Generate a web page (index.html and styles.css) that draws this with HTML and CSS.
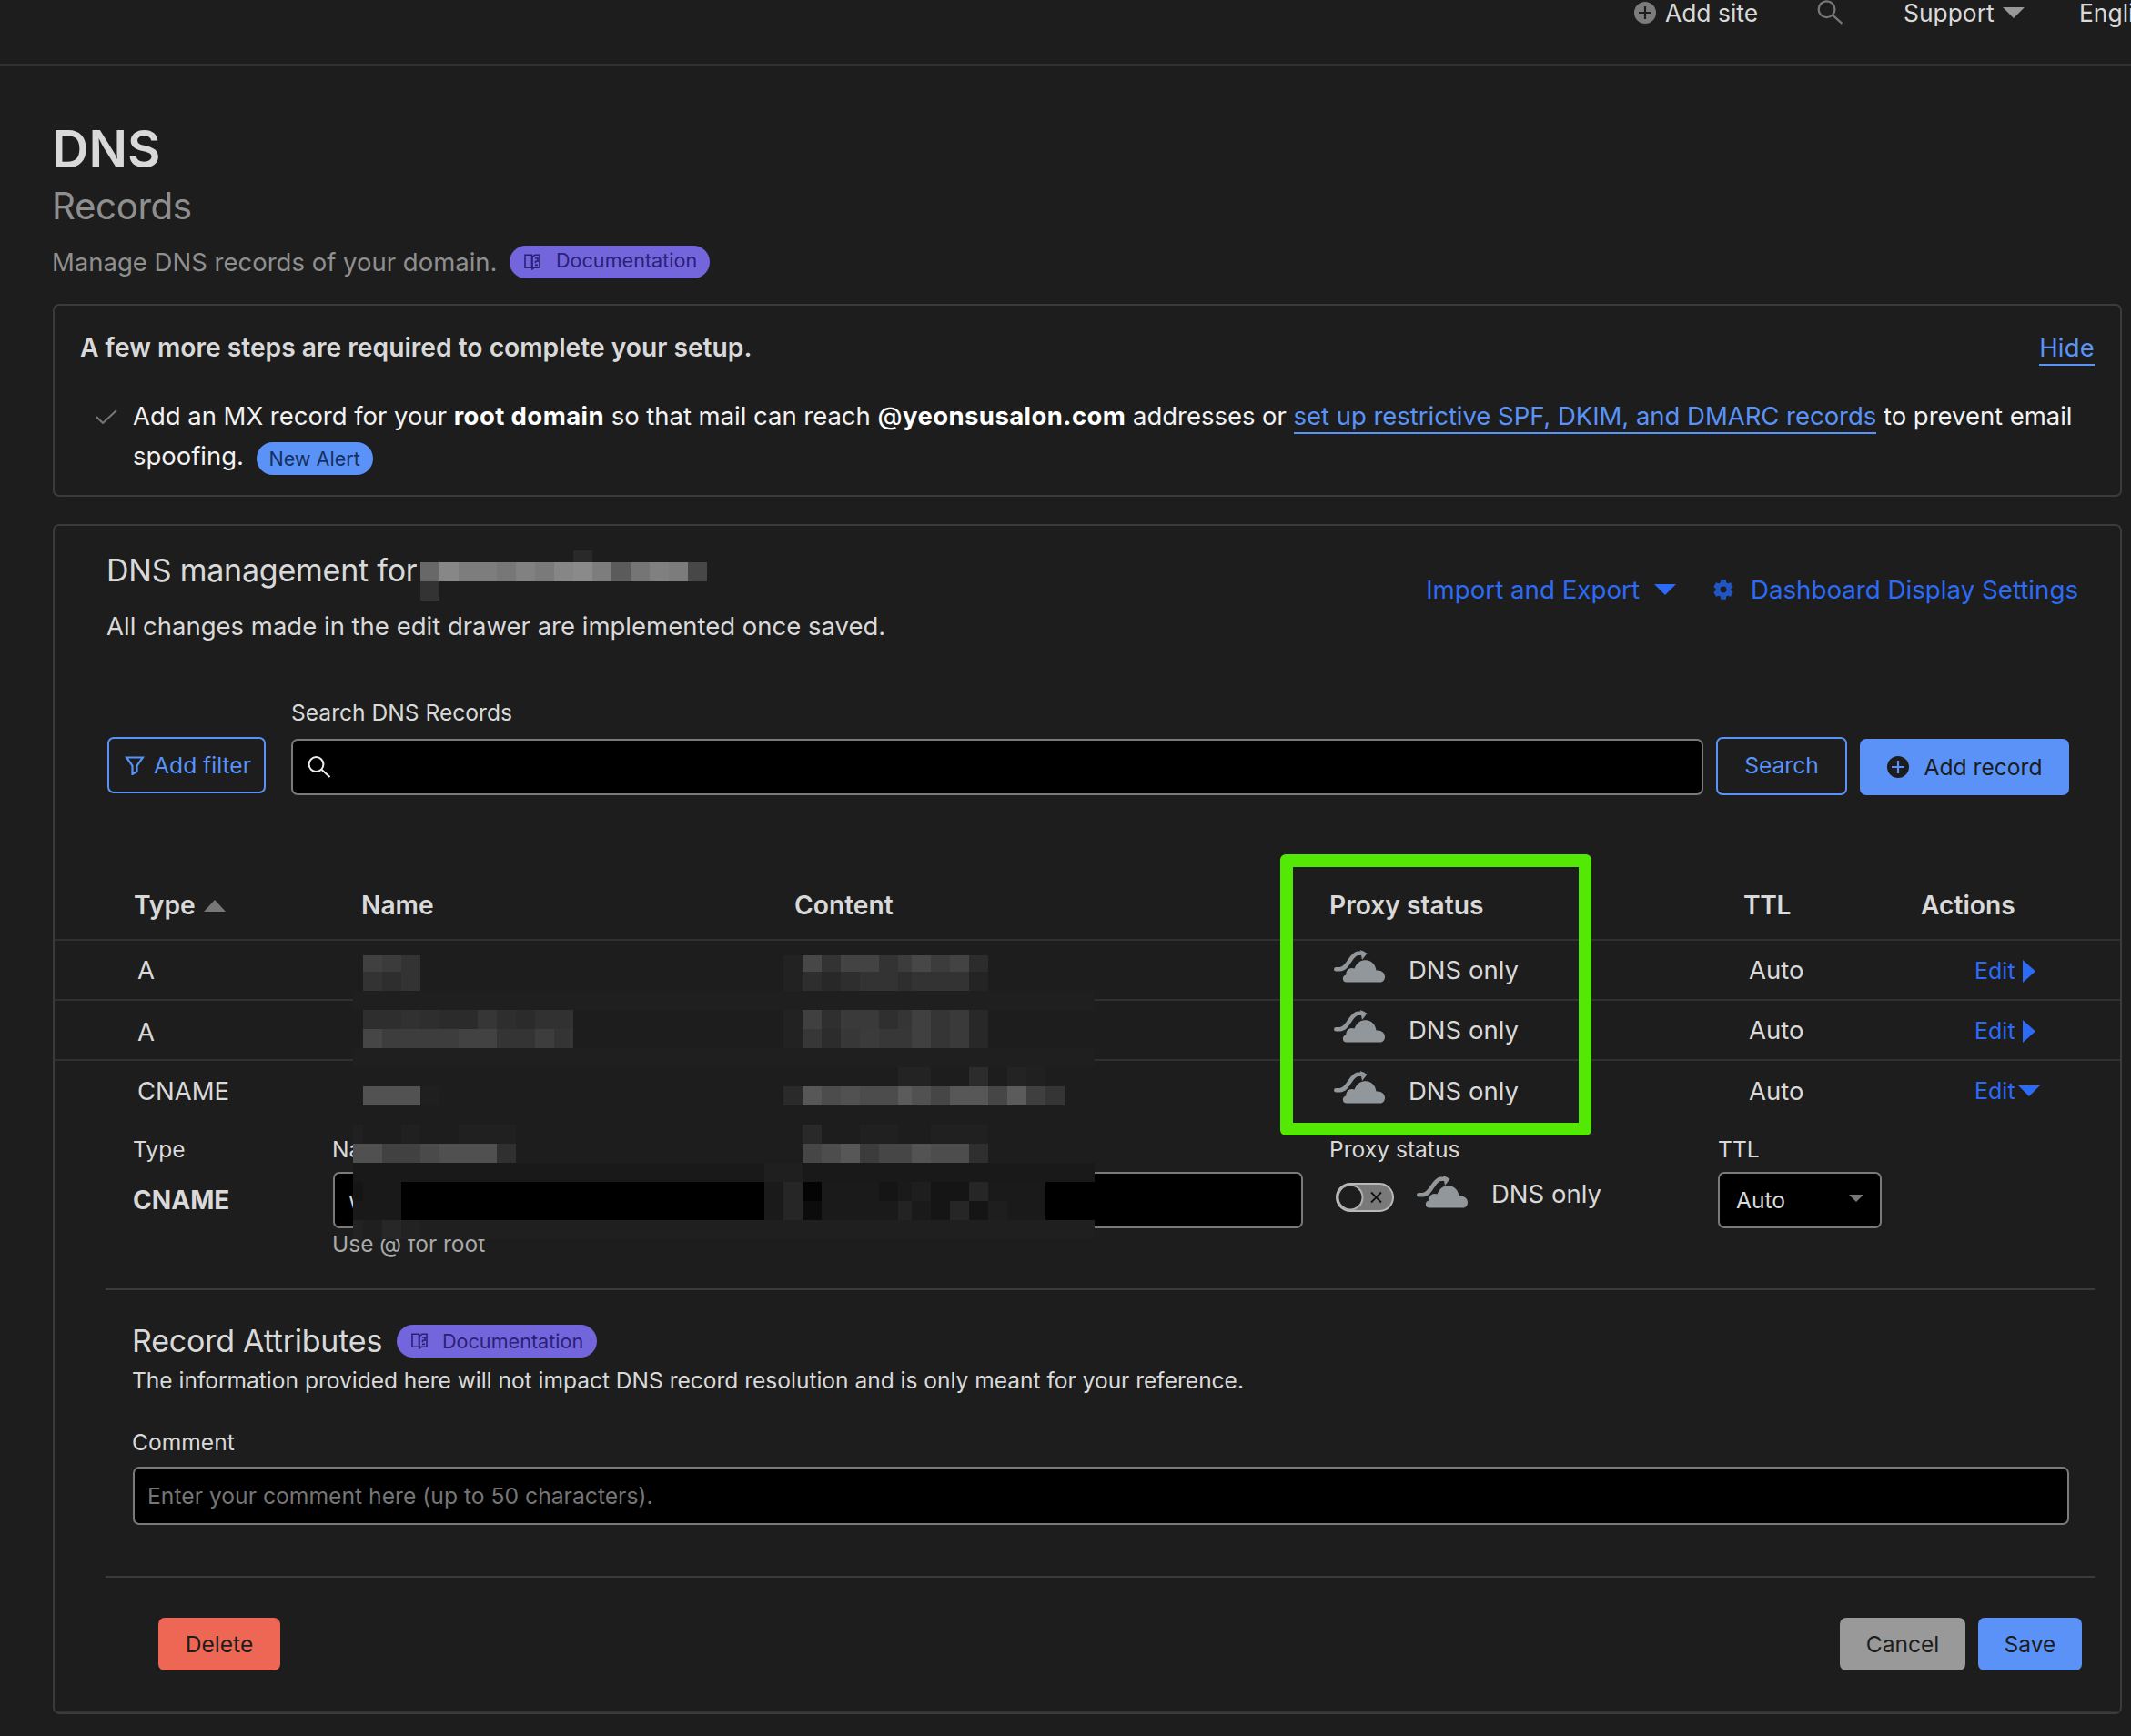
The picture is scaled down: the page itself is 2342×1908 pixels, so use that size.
FILE: index.html
```html
<!DOCTYPE html>
<html lang="en">
<head>
<meta charset="utf-8">
<title>DNS Records</title>
<link rel="stylesheet" href="styles.css">
</head>
<body>
<svg class="defs" width="0" height="0">
  <symbol id="i-plus" viewBox="0 0 24 24"><path fill-rule="evenodd" fill="currentColor" d="M12 0a12 12 0 1 0 0 24a12 12 0 1 0 0-24zM10.9 5h2.2v5.9H19v2.2h-5.9V19h-2.2v-5.9H5v-2.2h5.9z"/></symbol>
  <symbol id="i-search" viewBox="0 0 28 26"><g fill="none" stroke="currentColor" stroke-width="2.2"><circle cx="10.2" cy="9.8" r="8.6"/><path d="M16.5 16L26.5 25"/></g></symbol>
  <symbol id="i-down" viewBox="0 0 24 12"><path fill="currentColor" d="M0 0h24L12 12z"/></symbol>
  <symbol id="i-right" viewBox="0 0 14 25"><path fill="currentColor" d="M0 0l14 12.5L0 25z"/></symbol>
  <symbol id="i-doc" viewBox="0 0 18 18"><g fill="none" stroke="currentColor" stroke-width="1.6"><path d="M1 1.200h7.500v14.100H1zM9 15.800v1.700M9 3.500l3-2.300h5v14.100h-6l-2 1.500z"/><path d="M12 5h3v3.2h-2.5v2M12 12.4h3"/></g></symbol>
  <symbol id="i-cloud" viewBox="0 0 56 36"><g fill="#92979b"><path d="M14 35.6C8.500 35.600 8.800 28 13.200 27.500C13.200 22 17.500 18.500 22.500 20.600C25 13.500 30 11.200 35 11.200C41.500 11.200 45.800 16.500 46.500 22.600C52 22 56 25 56 29.600C56 33 54 35.600 51 35.600z"/><path d="M29 0L36.500 3.800L31 11z"/></g><path d="M2.300 21.200H6.500C16 21 17.500 5.500 26 3.800H32" fill="none" stroke="#92979b" stroke-width="4.600" stroke-linecap="round"/></symbol>
</svg>

<header class="topbar">
  <a class="add-site"><svg class="i24"><use href="#i-plus"/></svg>Add site</a>
  <svg class="top-search"><use href="#i-search"/></svg>
  <a class="support">Support<svg class="tri"><use href="#i-down"/></svg></a>
  <a class="lang">English</a>
</header>

<main>
  <div class="heading">
    <h1>DNS</h1>
    <h2>Records</h2>
    <div class="intro"><span class="intro-text">Manage DNS records of your domain.</span><a class="pill pill-doc raised"><svg class="doc"><use href="#i-doc"/></svg><span>Documentation</span></a></div>
  </div>

  <section class="card notice">
    <div class="notice-head"><strong>A few more steps are required to complete your setup.</strong><a class="ulink hide">Hide</a></div>
    <div class="notice-item">
      <svg class="check" viewBox="0 0 24 16"><path d="M1 8l7 7L23 1" fill="none" stroke="#777" stroke-width="2"/></svg>
      <p>Add an MX record for your <b>root domain</b> so that mail can reach <b><span class="at">@</span>yeonsusalon.com</b> addresses or <a class="ulink">set up restrictive SPF, DKIM, and DMARC records</a> to prevent email spoofing. <span class="pill pill-new">New Alert</span></p>
    </div>
  </section>

  <section class="card manage">
    <div class="manage-head">
      <div>
        <div class="manage-title"><h3>DNS management for</h3>
          <svg class="redact" viewBox="462 605 315 55" shape-rendering="crispEdges">
            <path fill="#292929" d="M630 605h21v13h-21z"/><path fill="#333" d="M462 639h21v21h-21z"/>
            <path fill="#686868" d="M462 618h21v21h-21z"/><path fill="#878787" d="M483 618h21v21h-21z"/>
            <path fill="#7d7d7d" d="M504 618h42v21h-42z"/><path fill="#777" d="M546 618h21v21h-21z"/>
            <path fill="#818181" d="M567 618h21v21h-21z"/><path fill="#7a7a7a" d="M588 618h21v21h-21z"/>
            <path fill="#868686" d="M609 618h21v21h-21z"/><path fill="#8a8a8a" d="M630 618h21v21h-21z"/>
            <path fill="#7d7d7d" d="M651 618h21v21h-21z"/><path fill="#5b5b5b" d="M672 618h21v21h-21z"/>
            <path fill="#757575" d="M693 618h21v21h-21z"/><path fill="#808080" d="M714 618h21v21h-21z"/>
            <path fill="#7c7c7c" d="M735 618h21v21h-21z"/><path fill="#474747" d="M756 618h21v21h-21z"/>
          </svg>
        </div>
        <p>All changes made in the edit drawer are implemented once saved.</p>
      </div>
      <div class="manage-links">
        <a>Import and Export</a><svg class="tri23"><use href="#i-down"/></svg>
        <svg class="gear" viewBox="-10.500 -10.500 21 21"><circle r="5.600" fill="none" stroke="currentColor" stroke-width="4.600"/><g fill="currentColor"><path id="t" d="M-2.600-10.300h5.200l.8 4h-6.800z"/><use href="#t" transform="rotate(60)"/><use href="#t" transform="rotate(120)"/><use href="#t" transform="rotate(180)"/><use href="#t" transform="rotate(240)"/><use href="#t" transform="rotate(300)"/></g></svg>
        <a>Dashboard Display Settings</a>
      </div>
    </div>

    <div class="toolbar">
      <button class="btn outline filter"><svg viewBox="0 0 21 21"><path d="M1.500 1.500h18L13 10.500V17l-5 3v-9.500z" fill="none" stroke="currentColor" stroke-width="2.200"/></svg>Add filter</button>
      <label class="search"><span>Search DNS Records</span><span class="input"><svg><use href="#i-search"/></svg></span></label>
      <button class="btn outline go">Search</button>
      <button class="btn primary add"><svg><use href="#i-plus"/></svg>Add record</button>
    </div>

    <div class="records">
      <div class="row head"><div>Type<svg class="sort" viewBox="0 0 24 13"><path d="M0 13h24L12 0z" fill="#777"/></svg></div><div class="nudge">Name</div><div class="nudge">Content</div><div class="nudge">Proxy status</div><div class="ttl-head">TTL</div><div>Actions</div></div>
      <div class="row"><div class="type">A</div><div></div><div></div><div class="proxy"><svg><use href="#i-cloud"/></svg>DNS only</div><div class="ttl">Auto</div><div class="edit">Edit<svg class="r"><use href="#i-right"/></svg></div></div>
      <div class="row"><div class="type low">A</div><div></div><div></div><div class="proxy"><svg><use href="#i-cloud"/></svg>DNS only</div><div class="ttl">Auto</div><div class="edit">Edit<svg class="r"><use href="#i-right"/></svg></div></div>
      <div class="row open"><div class="type">CNAME</div><div></div><div></div><div class="proxy"><svg><use href="#i-cloud"/></svg>DNS only</div><div class="ttl">Auto</div><div class="edit up">Edit<svg class="d"><use href="#i-down"/></svg></div></div>

      <div class="editor">
        <div class="field"><label>Type</label><strong>CNAME</strong></div>
        <div class="field pair">
          <div><label class="name">Name</label><span class="input value">w</span><small>Use @ for root</small></div>
          <div><label>&nbsp;</label><span class="input"></span></div>
        </div>
        <div class="field"><label class="nudge">Proxy status</label>
          <div class="switch-line">
            <svg class="toggle" viewBox="0 0 64 32"><rect x="1" y="1" width="62" height="30" rx="15" fill="#797979" stroke="#b9b9b9" stroke-width="2"/><circle cx="16" cy="16" r="13.500" fill="#1d1d1d" stroke="#b0b0b0" stroke-width="2"/><path d="M39 10.500l11 11M50 10.500l-11 11" stroke="#111" stroke-width="1.800"/></svg>
            <svg class="cloud"><use href="#i-cloud"/></svg><span>DNS only</span>
          </div>
        </div>
        <div class="field"><label>TTL</label><span class="input select">Auto<svg><use href="#i-down"/></svg></span></div>
      </div>

      <svg class="mask" viewBox="388 1050 815 312" shape-rendering="crispEdges">
        <path fill="#1d1d1d" d="M388 1050h815v312h-815z"/>
        <path fill="#1f1f1f" d="M388 1089h815v21h-815zM388 1152h815v21h-815zM388 1341h815v21h-815z"/>
        <path fill="#191919" d="M388 1278h815v21h-815z"/>
        <path d="M441 1299h399v42h-399zM1149 1299h54v42h-54z"/>
        <!-- name column -->
        <path fill="#404040" d="M399 1050h21v18h-21z"/><path fill="#3b3b3b" d="M420 1050h21v18h-21z"/><path fill="#333" d="M441 1050h21v18h-21zM399 1068h21v21h-21zM441 1068h21v21h-21z"/><path fill="#2e2e2e" d="M420 1068h21v21h-21z"/>
        <path fill="#2e2e2e" d="M399 1110h231v21h-231z"/><path fill="#313131" d="M441 1110h21v21h-21zM588 1110h42v21h-42z"/><path fill="#2b2b2b" d="M483 1110h42v21h-42zM567 1110h21v21h-21z"/><path fill="#363636" d="M525 1110h21v21h-21z"/>
        <path fill="#3d3d3d" d="M399 1131h231v21h-231z"/><path fill="#464646" d="M399 1131h21v21h-21z"/><path fill="#424242" d="M504 1131h42v21h-42z"/><path fill="#343434" d="M546 1131h42v21h-42zM609 1131h21v21h-21z"/>
        <path fill="#525252" d="M399 1194h63v21h-63z"/><path fill="#1f1f1f" d="M462 1194h21v21h-21z"/>
        <path fill="#202020" d="M388 1236h11v21h-11zM441 1236h21v21h-21zM504 1236h63v21h-63z"/>
        <path fill="#505050" d="M388 1257h158v21h-158z"/><path fill="#414141" d="M420 1257h42v21h-42z"/><path fill="#4a4a4a" d="M462 1257h21v21h-21z"/><path fill="#303030" d="M546 1257h21v21h-21z"/>
        <path fill="#191919" d="M388 1299h53v42h-53z"/><path fill="#151515" d="M388 1299h11v21h-11z"/>
        <path fill="#222" d="M388 1341h11v21h-11zM441 1341h21v21h-21z"/><path fill="#272727" d="M420 1341h21v21h-21z"/>
        <!-- content column -->
        <path fill="#222" d="M861 1050h21v39h-21z"/><path fill="#474747" d="M882 1050h21v18h-21zM1002 1050h21v18h-21z"/><path fill="#333" d="M903 1050h21v18h-21zM966 1050h21v18h-21z"/><path fill="#434343" d="M924 1050h42v18h-42zM1044 1050h21v18h-21z"/><path fill="#3c3c3c" d="M987 1050h15v18h-15zM1023 1050h21v18h-21z"/><path fill="#2c2c2c" d="M1065 1050h21v18h-21z"/>
        <path fill="#2e2e2e" d="M882 1068h105v21h-105zM987 1068h15v21h-15z"/><path fill="#282828" d="M903 1068h21v21h-21z"/><path fill="#333" d="M945 1068h42v21h-42zM1002 1068h63v21h-63z"/><path fill="#242424" d="M1065 1068h21v21h-21z"/>
        <path fill="#222" d="M861 1110h21v42h-21z"/><path fill="#404040" d="M882 1110h21v21h-21zM1002 1110h21v42h-21z"/><path fill="#2f2f2f" d="M903 1110h21v21h-21zM966 1110h21v21h-21z"/><path fill="#3a3a3a" d="M924 1110h42v21h-42zM1044 1110h21v42h-21z"/><path fill="#353535" d="M987 1110h15v21h-15zM1023 1110h21v42h-21z"/><path fill="#282828" d="M1065 1110h21v42h-21z"/>
        <path fill="#373737" d="M882 1131h21v21h-21zM924 1131h21v21h-21zM966 1131h36v21h-36z"/><path fill="#2c2c2c" d="M903 1131h21v21h-21z"/><path fill="#3b3b3b" d="M945 1131h21v21h-21z"/>
        <path fill="#232323" d="M987 1173h36v21h-36zM1107 1173h21v21h-21z"/><path fill="#2c2c2c" d="M1065 1173h21v21h-21z"/><path fill="#202020" d="M1128 1173h21v21h-21z"/>
        <path fill="#2a2a2a" d="M861 1194h21v21h-21z"/><path fill="#575757" d="M882 1194h21v21h-21zM1044 1194h42v21h-42z"/><path fill="#4c4c4c" d="M903 1194h84v21h-84z"/><path fill="#515151" d="M924 1194h21v21h-21zM1002 1194h21v21h-21z"/><path fill="#5b5b5b" d="M987 1194h15v21h-15zM1107 1194h21v21h-21z"/><path fill="#464646" d="M1023 1194h21v21h-21zM1086 1194h21v21h-21z"/><path fill="#3f3f3f" d="M1128 1194h21v21h-21z"/><path fill="#353535" d="M1149 1194h21v21h-21z"/>
        <path fill="#292929" d="M882 1236h21v21h-21z"/><path fill="#202020" d="M945 1236h42v21h-42zM1023 1236h63v21h-63z"/>
        <path fill="#464646" d="M882 1257h21v21h-21zM966 1257h36v21h-36z"/><path fill="#4d4d4d" d="M903 1257h21v21h-21zM1023 1257h42v21h-42z"/><path fill="#575757" d="M924 1257h21v21h-21z"/><path fill="#3c3c3c" d="M945 1257h21v21h-21z"/><path fill="#535353" d="M1002 1257h21v21h-21z"/><path fill="#2f2f2f" d="M1065 1257h21v21h-21z"/>
        <path fill="#1f1f1f" d="M840 1278h42v21h-42z"/><path fill="#1a1a1a" d="M840 1299h309v42h-309z"/><path fill="#262626" d="M861 1299h21v42h-21zM1065 1299h21v21h-21zM1044 1320h21v21h-21z"/><path fill="#040404" d="M882 1299h21v21h-21z"/><path fill="#0c0c0c" d="M882 1320h21v21h-21z"/><path fill="#151515" d="M966 1299h21v21h-21zM1023 1299h42v21h-42zM1023 1320h21v21h-21zM1065 1320h21v21h-21z"/><path fill="#1e1e1e" d="M1002 1299h21v21h-21zM1086 1320h21v21h-21z"/><path fill="#232323" d="M987 1320h15v21h-15z"/>
      </svg>
      <div class="highlight"></div>
    </div>

    <div class="attributes">
      <div class="attr-title"><h3>Record Attributes</h3><a class="pill pill-doc"><svg class="doc"><use href="#i-doc"/></svg><span>Documentation</span></a></div>
      <p>The information provided here will not impact DNS record resolution and is only meant for your reference.</p>
      <label>Comment</label>
      <span class="input comment">Enter your comment here (up to 50 characters).</span>
    </div>
    <div class="actions">
      <button class="btn danger">Delete</button>
      <button class="btn neutral">Cancel</button>
      <button class="btn primary save">Save</button>
    </div>
  </section>
</main>
</body>
</html>
```
FILE: styles.css
```css
* { box-sizing: border-box; }
body { margin: 0; height: 1908px; overflow: hidden; background: #1d1d1d; color: #d9d9d9; font: 27.5px/36px Inter, "Liberation Sans", sans-serif; }
h1, h2, h3, p { margin: 0; font-weight: 400; }
svg { display: block; flex: none; }
.defs { position: absolute; }

.topbar { display: flex; height: 72px; padding-left: 1796px; border-bottom: 2px solid #313131; font-size: 26.400px; line-height: 28px; overflow: hidden; white-space: nowrap; }
.topbar a { display: flex; flex: none; align-items: center; height: 28px; }
.i24 { width: 24px; height: 24px; color: #7c7c7c; margin-right: 10px; }
.topbar .add-site { width: 201px; }
.top-search { width: 29px; height: 27px; color: #777; margin-right: 66px; }
.topbar .support { width: 193px; }
.tri { width: 24px; height: 12px; color: #999; margin-left: 9px; }

main { padding: 62px 10px 0 58px; }
.heading { margin-left: -1px; }
h1 { font-size: 56px; line-height: 60px; font-weight: 600; }
h2 { margin-top: 9px; font-size: 40.300px; line-height: 48px; letter-spacing: -.4px; color: #8f8f8f; }
.intro { display: flex; align-items: center; height: 36px; margin-top: 19px; color: #8f8f8f; }
.intro-text { width: 503px; white-space: nowrap; }
.pill { display: inline-flex; align-items: center; height: 36px; border-radius: 18px; font-size: 21.600px; line-height: 28px; letter-spacing: 0; }
.pill-doc { width: 220px; padding-left: 16px; background: #7366dd; color: #2b1f76; }
.doc { width: 18px; height: 18px; margin-right: 17px; }
.attr-title .doc { margin-right: 16px; }
.raised span { padding-bottom: 4px; }
.pill-new { width: 128px; justify-content: center; background: #5a92f7; color: #15305f; vertical-align: -1px; margin: -6px 0 -6px 6px; }

.card { border: 2px solid #3b3b3b; border-radius: 7px; }
.notice { height: 212px; margin-top: 28px; padding: 28px 28px 0; }
.notice-head { display: flex; justify-content: space-between; }
.notice-head strong { font-size: 28.200px; font-weight: 600; }
.ulink { color: #5a93f8; border-bottom: 2px solid #5a93f8; padding-bottom: 1px; }
.hide { height: 38px; line-height: 36px; padding: 0; letter-spacing: .2px; }
.notice-item { display: flex; margin-top: 33px; color: #f2f2f2; line-height: 44.300px; letter-spacing: -.03px; }
.notice-item b { font-weight: 700; letter-spacing: .42px; color: #fff; }
.notice-item .at { font-weight: 500; }
.check { width: 24px; height: 16px; margin: 15px 17px 0 17px; }

.manage { position: relative; height: 1308px; margin-top: 30px; }
.manage-head { display: flex; justify-content: space-between; height: 128px; padding: 28px 46px 0 57px; }
.manage-title { display: flex; height: 42px; }
.manage h3 { font-size: 34px; line-height: 42px; letter-spacing: -.22px; white-space: nowrap; }
.manage-title h3 { width: 345px; }
.redact { width: 315px; height: 55px; margin-top: -1px; }
.manage-head p { margin-top: 22px; }
.manage-links { display: flex; align-items: center; height: 36px; margin-top: 24px; color: #2c6bf6; font-size: 27.700px; white-space: nowrap; }
.tri23 { width: 24px; height: 12px; margin: 0 41px 0 16px; }
.gear { width: 22px; height: 22px; margin-right: 19px; color: #2255c4; }

.toolbar { display: flex; align-items: flex-end; height: 106px; margin-top: 62px; padding: 0 56px 0 58px; font-size: 24.600px; line-height: 30px; }
.btn { display: flex; align-items: center; justify-content: center; height: 62px; padding: 0; border: 0; border-radius: 7px; font: inherit; font-size: 24.600px; line-height: 30px; white-space: nowrap; color: #1d1d1d; }
.btn.outline { background: none; border: 2px solid #5a93f8; color: #5a93f8; }
.filter { width: 174px; margin-bottom: 2px; }
.btn.filter { padding-left: 3px; }
.filter svg { width: 22px; height: 21px; margin-right: 10px; }
.search { flex: 1; margin: 0 14px 0 28px; }
.search > span:first-child { display: block; margin-bottom: 14px; }
.input { display: flex; align-items: center; height: 62px; border: 2px solid #7a7a7a; border-radius: 7px; background: #000; }
.search svg { width: 28px; height: 24px; margin-left: 15px; color: #eee; }
.btn.go { width: 144px; height: 64px; padding-bottom: 2px; margin-right: 14px; }
.btn.primary { background: #5a92f7; }
.add { width: 230px; }
.add svg { width: 24px; height: 24px; margin-right: 17px; }

.records { position: relative; height: 458px; margin-top: 84px; }
.row { display: grid; grid-template-columns: 249px 476px 588px 457px 194px 1fr; align-items: center; height: 66px; padding-left: 87px; border-bottom: 2px solid #303030; }
.row > div { display: flex; align-items: center; white-space: nowrap; }
.head { height: 76px; font-size: 28.200px; font-weight: 600; }
.records .nudge { padding-left: 1px; }
.row .ttl-head { margin-left: -1px; letter-spacing: -.3px; }
.sort { width: 24px; height: 13px; margin-left: 9px; }
.row.open { border: 0; }
.row .type { padding-left: 4px; }
.row .low { padding-top: 4px; }
.row .proxy { padding-left: 6px; }
.proxy svg, .cloud { width: 56px; height: 36px; margin-right: 26px; }
.proxy svg { margin-top: -8px; }
.row .ttl { padding-left: 5px; }
.row .edit { padding: 2px 0 0 59px; color: #2c6bf6; font-size: 25px; }
.row .up { padding-top: 0; }
.edit .r { width: 14px; height: 25px; margin-left: 8px; }
.edit .d { width: 24px; height: 12px; margin-left: 3px; }

.editor { display: grid; grid-template-columns: 220px 1094px 428px 180px; margin-left: 86px; padding-top: 16px; font-size: 24.600px; line-height: 30px; }
.editor label { display: block; margin-bottom: 10px; }
.editor .name { margin-left: -1px; }
.editor strong { display: block; font-size: 28.100px; line-height: 62px; font-weight: 700; }
.pair { display: grid; grid-template-columns: 479px 562px; gap: 25px; }
.value { padding-left: 15px; }
.editor small { display: block; margin: 2px 0 0 -1px; font-size: 24.500px; color: #a9a9a9; }
.switch-line { display: flex; align-items: center; height: 48px; padding-left: 8px; font-size: 27.500px; }
.toggle { width: 64px; height: 32px; margin: 8px 25px 0 0; }
.cloud { margin-top: -4px; }
.select { padding-left: 18px; justify-content: space-between; }
.select svg { width: 16px; height: 10px; margin: -4px 18px 0 0; color: #777; }

.mask { position: absolute; left: 328px; top: 92px; width: 815px; height: 312px; }
.highlight { position: absolute; left: 1347px; top: -19px; width: 342px; height: 309px; border: 14px solid #54e905; border-radius: 6px; }

.attributes { height: 318px; margin: 0 28px 0 56px; padding: 38px 28px 0 29px; border-top: 2px solid #3b3b3b; border-bottom: 2px solid #3b3b3b; font-size: 24.600px; line-height: 30px; }
.attr-title { display: flex; align-items: center; height: 36px; }
.attr-title h3 { width: 291px; }
.attributes p { margin: 8px 0 36px; font-size: 24.530px; line-height: 34px; }
.attributes label { display: block; }
.comment { height: 64px; margin: 12px 0 0 1px; padding-left: 14px; color: #757575; font-size: 24.700px; }
.actions { display: flex; height: 148px; padding: 44px 42px 0 114px; border-bottom: 2px solid #2f2f2f; }
.actions .btn { height: 58px; }
.danger { width: 134px; margin-right: auto; background: #ee6654; }
.neutral { width: 138px; margin-right: 14px; background: #999; }
.save { width: 114px; }
```
